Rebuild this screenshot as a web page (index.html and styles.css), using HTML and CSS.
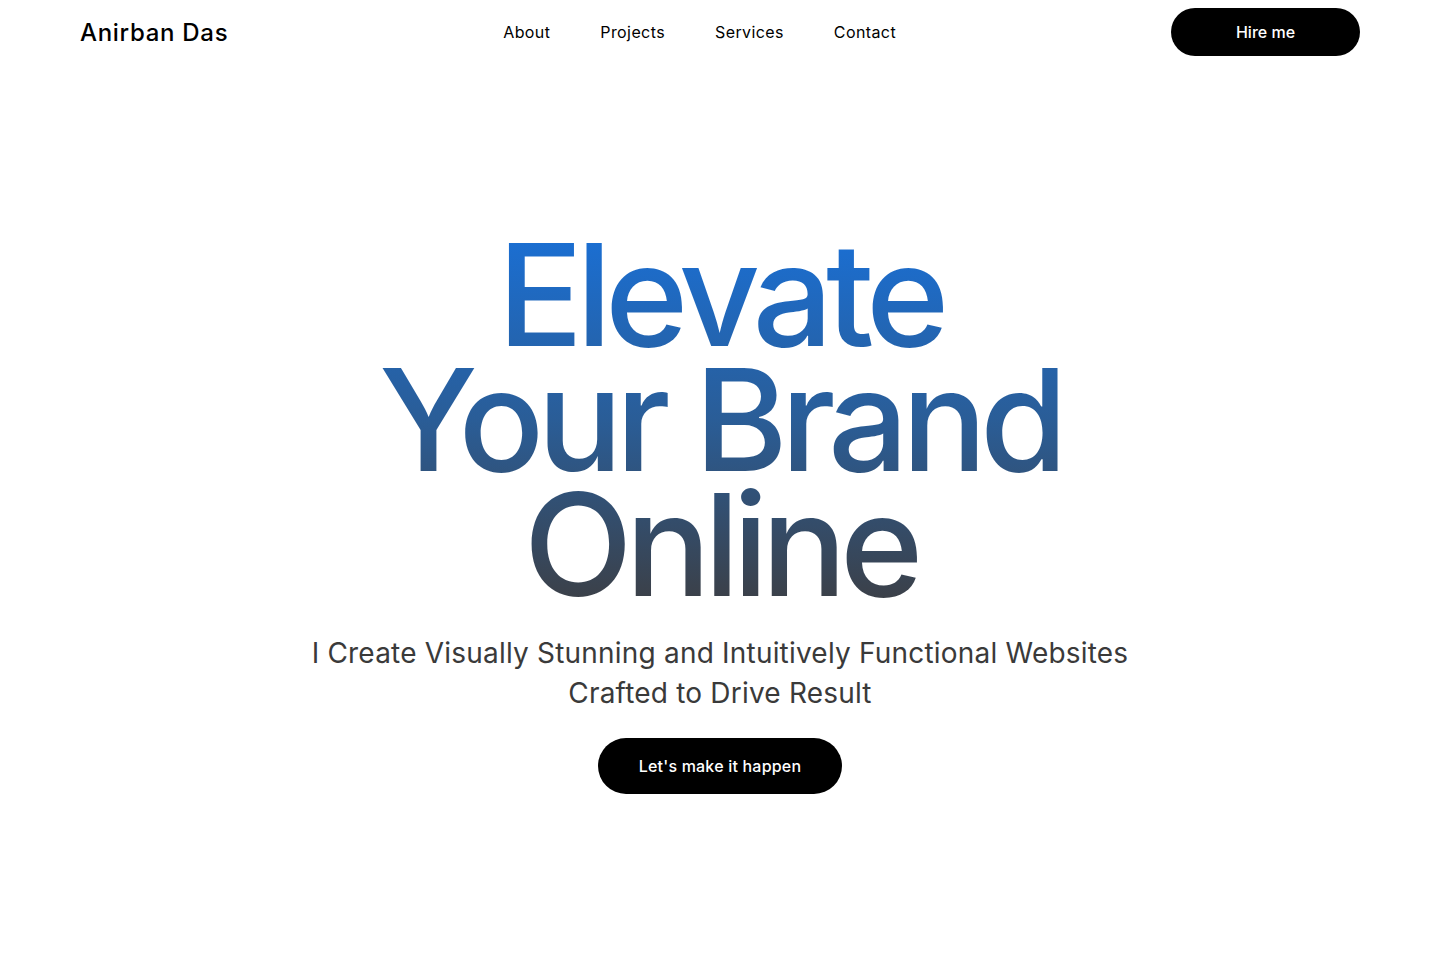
FILE: index.html
```html
<!DOCTYPE html>
<html lang="en">
<head>
<meta charset="utf-8">
<title>Anirban Das</title>
<link rel="stylesheet" href="styles.css">
</head>
<body>
<header class="topbar">
  <a class="logo" href="#">Anirban Das</a>
  <nav class="nav">
    <a href="#">About</a>
    <a href="#">Projects</a>
    <a href="#">Services</a>
    <a href="#">Contact</a>
  </nav>
  <a class="btn btn-hire" href="#">Hire me</a>
</header>
<main class="hero">
  <h1 class="headline"><span class="line">Elevate</span><span class="line">Your Brand</span><span class="line">Online</span></h1>
  <p class="subtitle">I Create Visually Stunning and Intuitively Functional Websites<br>Crafted to Drive Result</p>
  <a class="btn btn-cta" href="#">Let's make it happen</a>
</main>
</body>
</html>
```
FILE: styles.css
```css
* { box-sizing: border-box; }
html, body { margin: 0; padding: 0; background: #fff; }
body {
  font-family: Inter, "Open Sans", "Liberation Sans", sans-serif;
  color: #000;
  width: 1440px;
  height: 980px;
  overflow: hidden;
}
a { text-decoration: none; color: inherit; }

.topbar {
  display: flex;
  align-items: center;
  justify-content: space-between;
  padding: 8px 80px 0;
  height: 56px;
}
.logo {
  font-size: 24px;
  font-weight: 500;
  letter-spacing: 0.7px;
}
.nav {
  display: flex;
  gap: 50px;
}
.nav a {
  font-size: 16px;
  font-weight: 400;
  letter-spacing: 0.4px;
}
.btn {
  display: inline-flex;
  align-items: center;
  justify-content: center;
  background: #000;
  color: #fff;
  border-radius: 999px;
  font-weight: 500;
}
.btn-hire {
  width: 189px;
  height: 48px;
  font-size: 16px;
}

.hero {
  display: flex;
  flex-direction: column;
  align-items: center;
  text-align: center;
  padding-top: 176px;
}
.headline {
  margin: 0;
  display: flex;
  flex-direction: column;
  align-items: center;
  font-size: 142px;
  font-weight: 500;
  letter-spacing: -7px;
  background: linear-gradient(180deg, #1a6fd4 0%, #2a5d97 50%, #3c3f45 100%);
  -webkit-background-clip: text;
  background-clip: text;
  color: transparent;
}
.line {
  display: block;
  height: 125px;
  line-height: 125px;
}
.subtitle {
  margin: 26px 0 0;
  font-size: 28px;
  line-height: 40px;
  color: #3a3a3a;
  letter-spacing: 0.2px;
}
.btn-cta {
  margin-top: 25px;
  width: 244px;
  height: 56px;
  font-size: 16px;
  letter-spacing: 0.2px;
}
```
